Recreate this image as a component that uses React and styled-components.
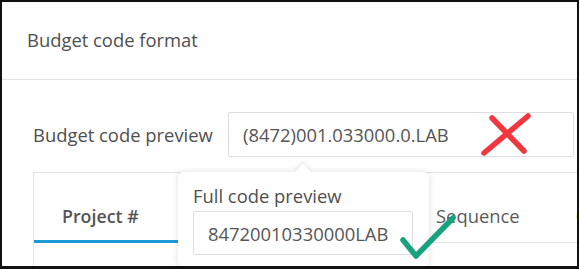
import React from "react";
import styled, { createGlobalStyle } from "styled-components";

const Global = createGlobalStyle`
  html, body { margin: 0; padding: 0; background: #fff; }
  body { font-family: "Open Sans", "Noto Sans", sans-serif; color: #4f4f4f; }
  * { box-sizing: border-box; }
`;

const Frame = styled.div`
  position: relative;
  width: 579px;
  height: 269px;
  border-style: solid;
  border-color: #111;
  border-width: 2px 2px 3px 2px;
  overflow: hidden;
  background: #fff;
`;

const Header = styled.div`
  height: 78px;
  display: flex;
  align-items: center;
  padding-left: 25px;
  border-bottom: 1px solid #e2e2e2;
`;

const Title = styled.h1`
  margin: -3px 0 0 0;
  font-size: 18.4px;
  font-weight: 400;
  color: #4f4f4f;
`;

const Body = styled.div`
  padding: 32px 0 0 31px;
`;

const PreviewRow = styled.div`
  display: flex;
  align-items: center;
`;

const Label = styled.span`
  font-size: 18.4px;
  color: #4f4f4f;
  width: 195px;
  flex: none;
`;

const CodeBox = styled.div`
  width: 346px;
  height: 45px;
  border: 1px solid #dedede;
  border-radius: 2px;
  display: flex;
  align-items: center;
  padding-left: 14px;
  font-size: 18.4px;
  color: #555;
`;

const Table = styled.div`
  margin-top: 15px;
  border: 1px solid #e4e4e4;
  border-right: none;
  height: 120px;
`;

const TabRow = styled.div`
  display: flex;
  height: 70px;
  border-bottom: 1px solid #e4e4e4;
  white-space: nowrap;
`;

const Tab = styled.div`
  flex: none;
  min-width: ${(p) => p.$minWidth || 0}px;
  padding: 18px 28px 0;
  display: flex;
  align-items: center;
  font-size: ${(p) => (p.$active ? 17.8 : 18.4)}px;
  font-weight: ${(p) => (p.$active ? 600 : 400)};
  color: ${(p) => (p.$active ? "#555" : "#5a5a5a")};
  border-bottom: 3px solid ${(p) => (p.$active ? "#1f9ad8" : "transparent")};
  margin-bottom: -1px;
`;

const Popover = styled.div`
  position: absolute;
  left: 176px;
  top: 170px;
  width: 251px;
  height: 95px;
  background: #fff;
  border-radius: 5px;
  box-shadow: 0 0 6px rgba(0, 0, 0, 0.14);
  padding: 11px 0 0 15px;

  &::before {
    content: "";
    position: absolute;
    left: 119px;
    top: -6px;
    width: 12px;
    height: 12px;
    background: #fff;
    transform: rotate(45deg);
    box-shadow: -2px -2px 3px rgba(0, 0, 0, 0.07);
  }
`;

const PopLabel = styled.div`
  position: relative;
  font-size: 18.4px;
  color: #4f4f4f;
  line-height: 25px;
`;

const PopBox = styled.div`
  margin-top: 3px;
  width: 220px;
  height: 44px;
  border: 1px solid #dedede;
  border-radius: 2px;
  display: flex;
  align-items: center;
  padding-left: 14px;
  font-size: 18.4px;
  color: #555;
`;

const Mark = styled.svg`
  position: absolute;
  left: ${(p) => p.$x}px;
  top: ${(p) => p.$y}px;
  overflow: visible;
`;

export default function App() {
  return (
    <>
      <Global />
      <Frame>
        <Header>
          <Title>Budget code format</Title>
        </Header>
        <Body>
          <PreviewRow>
            <Label>Budget code preview</Label>
            <CodeBox>(8472)001.033000.0.LAB</CodeBox>
          </PreviewRow>
          <Table>
            <TabRow>
              <Tab $active $minWidth={146}>Project #</Tab>
              <Tab $minWidth={228}>Cost code</Tab>
              <Tab>Sequence</Tab>
              <Tab>Cost type</Tab>
            </TabRow>
          </Table>
        </Body>
        <Popover>
          <PopLabel>Full code preview</PopLabel>
          <PopBox>84720010330000LAB</PopBox>
        </Popover>
        <Mark $x={0} $y={0} width="1" height="1">
          <g stroke="#f2363f" strokeWidth="5.5" strokeLinecap="round" fill="none">
            <line x1="482" y1="151" x2="526" y2="114" />
            <line x1="490" y1="116" x2="522" y2="149" />
          </g>
          <polyline
            points="401,238 414,254 451,216"
            stroke="#16a37e"
            strokeWidth="5.5"
            strokeLinecap="round"
            strokeLinejoin="round"
            fill="none"
          />
        </Mark>
      </Frame>
    </>
  );
}
